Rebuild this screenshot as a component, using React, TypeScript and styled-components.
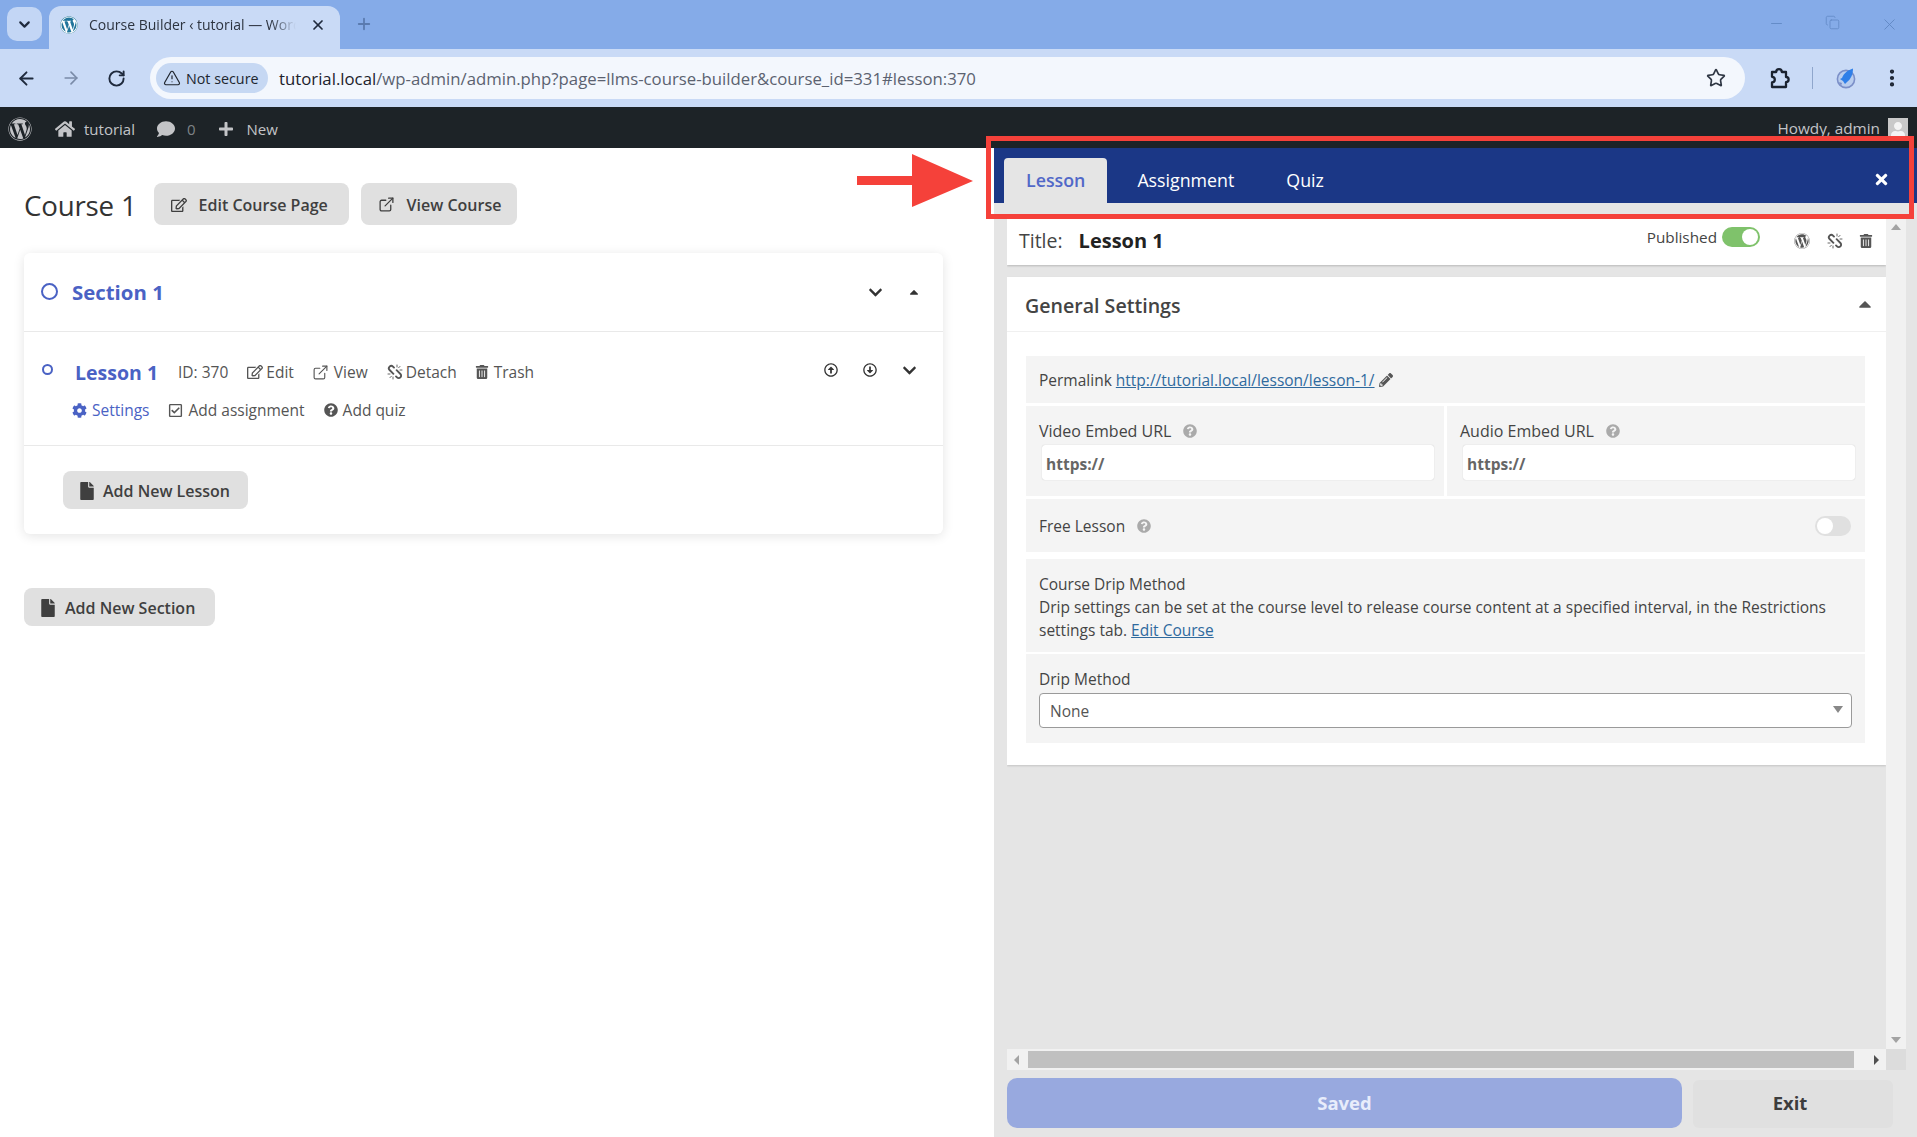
import React from "react";
import styled, { createGlobalStyle } from "styled-components";
import { ArrowLeft, ArrowRight, RotateCw, TriangleAlert, Star, EllipsisVertical, ChevronDown, Plus, X, Minus, Copy, ExternalLink } from "lucide-react";
import {
  FaWordpress, FaHome, FaComment, FaPlus, FaTimes, FaRegEdit, FaChevronDown, FaCaretUp, FaTrashAlt,
  FaCog, FaRegCheckSquare, FaQuestionCircle, FaFile, FaRegArrowAltCircleUp, FaRegArrowAltCircleDown, FaPencilAlt, FaUser,
} from "react-icons/fa";

const Global = createGlobalStyle`
  html, body { margin: 0; padding: 0; height: 100%; overflow: hidden; background: #fff; }
  body { font-family: "Open Sans", "Noto Sans", sans-serif; color: #444; }
  * { box-sizing: border-box; }
`;

const Page = styled.div`
  position: relative;
  width: 1917px;
  height: 1137px;
  display: flex;
  flex-direction: column;
  overflow: hidden;
`;

/* browser chrome */
const TabStrip = styled.div`
  height: 49px;
  background: #85abe8;
  display: flex;
  align-items: flex-end;
  padding-left: 7px;
  flex: none;
`;
const TabMenu = styled.div`
  width: 35px;
  height: 34px;
  margin-bottom: 8px;
  border-radius: 10px;
  background: #c3d6f5;
  display: flex;
  align-items: center;
  justify-content: center;
  color: #1f2a3d;
`;
const BrowserTab = styled.div`
  width: 291px;
  height: 43px;
  margin-left: 7px;
  padding: 0 0 6px 11px;
  border-radius: 12px 12px 0 0;
  background: #c9daf6;
  display: flex;
  align-items: center;
`;
const Favicon = styled.div`
  width: 18px;
  height: 18px;
  border-radius: 50%;
  background: #fff;
  color: #21759b;
  display: flex;
  align-items: center;
  justify-content: center;
  flex: none;
`;
const TabTitle = styled.div`
  width: 207px;
  height: 20px;
  margin-left: 11px;
  font: 14px/20px "Open Sans", sans-serif;
  color: #2d3440;
  white-space: nowrap;
  overflow: hidden;
  -webkit-mask-image: linear-gradient(90deg, #000 88%, transparent);
  mask-image: linear-gradient(90deg, #000 88%, transparent);
`;
const TabClose = styled.div`
  margin-left: 14px;
  display: flex;
  color: #1f2a3d;
`;
const NewTab = styled.div`
  margin: 0 0 16px 15px;
  display: flex;
  color: #5a7bb0;
`;
const WindowControls = styled.div`
  margin-left: auto;
  align-self: center;
  padding-right: 18px;
  display: flex;
  gap: 40px;
  color: #5f86c2;
`;
const Toolbar = styled.div`
  height: 58px;
  background: #c9daf6;
  display: flex;
  align-items: center;
  flex: none;
  padding-left: 14px;
`;
const NavIcon = styled.div<{ $muted?: boolean }>`
  width: 24px;
  margin-right: 21px;
  display: flex;
  justify-content: center;
  color: ${(p) => (p.$muted ? "#7a8ba8" : "#1f2a3d")};
`;
const Omnibox = styled.div`
  width: 1595px;
  height: 42px;
  margin-left: 1px;
  border-radius: 21px;
  background: #f3f7fd;
  display: flex;
  align-items: center;
  padding: 0 19px 0 6px;
`;
const SecurityChip = styled.div`
  width: 112px;
  height: 30px;
  border-radius: 15px;
  background: #c6d8f3;
  display: flex;
  align-items: center;
  gap: 5px;
  padding-left: 7px;
  font: 14.3px "Open Sans", sans-serif;
  color: #20262f;
  white-space: nowrap;
`;
const Url = styled.div`
  margin-left: 11px;
  font: 16.75px "Open Sans", sans-serif;
  color: #5b6270;
  white-space: nowrap;
  b { font-weight: 400; color: #1c222b; }
`;
const OmniEnd = styled.div`
  margin-left: auto;
  display: flex;
  color: #2f3744;
`;
const ToolIcons = styled.div`
  display: flex;
  align-items: center;
  margin-left: 22px;
  color: #1a2230;
`;
const ToolSep = styled.div`
  width: 1px;
  height: 22px;
  background: #8fa6cc;
  margin: 0 23px 0 21px;
`;
const GlobeIcon = styled.svg`
  margin-right: 25px;
  display: block;
`;

/* WP admin bar */
const AdminBar = styled.div`
  height: 41px;
  background: #1d2327;
  color: #c3c4c7;
  display: flex;
  align-items: center;
  padding: 2px 0 0 8px;
  font: 15px "Open Sans", sans-serif;
  flex: none;
`;
const AdminItem = styled.div<{ $left: number }>`
  margin-left: ${(p) => p.$left}px;
  display: flex;
  align-items: center;
  color: #c3c4c7;
`;
const AdminDim = styled(AdminItem)`
  color: #7d8286;
`;
const Howdy = styled.div`
  margin-left: auto;
  display: flex;
  align-items: flex-start;
  align-self: flex-start;
  padding: 9px 9px 0 0;
  gap: 8px;
  font-size: 15.3px;
`;
const Avatar = styled.div`
  width: 20px;
  height: 20px;
  background: #c9c9c9;
  color: #f4f4f4;
  display: flex;
  align-items: flex-end;
  justify-content: center;
  overflow: hidden;
`;

/* main */
const Main = styled.div`
  flex: 1;
  display: flex;
  min-height: 0;
`;
const Builder = styled.div`
  width: 994px;
  padding: 35px 0 0 24px;
  background: #fff;
  flex: none;
`;
const CourseHead = styled.div`
  display: flex;
  align-items: center;
  height: 42px;
  gap: 12px;
`;
const CourseTitle = styled.h1`
  margin: 0 5px 0 0;
  padding-top: 1px;
  font: 400 27.7px "Open Sans", sans-serif;
  letter-spacing: -0.2px;
  color: #333;
  white-space: nowrap;
`;
const GreyButton = styled.button<{ $width: number; $height: number; $gap?: number; $pad?: number }>`
  width: ${(p) => p.$width}px;
  height: ${(p) => p.$height}px;
  border: 0;
  border-radius: 8px;
  background: #e0e0e0;
  color: #3f3f3f;
  font: 600 16px "Open Sans", sans-serif;
  display: flex;
  align-items: center;
  gap: ${(p) => p.$gap ?? 12}px;
  padding: 1px 0 0 ${(p) => p.$pad ?? 17}px;
  white-space: nowrap;
  svg { flex: none; }
`;
const Card = styled.div`
  width: 919px;
  height: 281px;
  margin-top: 28px;
  border-radius: 6px;
  background: #fff;
  box-shadow: 0 2px 12px rgba(0, 0, 0, 0.11);
`;
const SectionRow = styled.div`
  height: 79px;
  border-bottom: 1px solid #e9e9e9;
  display: flex;
  align-items: center;
  padding: 0 22px 0 17px;
`;
const Ring = styled.span<{ $size: number; $border: number; $lift: number }>`
  width: ${(p) => p.$size}px;
  height: ${(p) => p.$size}px;
  margin-bottom: ${(p) => p.$lift}px;
  border: ${(p) => p.$border}px solid #4a62c4;
  border-radius: 50%;
  flex: none;
`;
const SectionName = styled.div`
  margin-left: 14px;
  font: 700 20.4px "Open Sans", sans-serif;
  color: #4a62c4;
`;
const RowEnd = styled.div<{ $gap: number; $lift?: number }>`
  margin: 0 0 ${(p) => p.$lift ?? 0}px auto;
  display: flex;
  align-items: center;
  gap: ${(p) => p.$gap}px;
  color: #333;
`;
const LessonBlock = styled.div`
  height: 114px;
  border-bottom: 1px solid #e9e9e9;
  padding: 24px 26px 0 18px;
`;
const LessonTop = styled.div`
  display: flex;
  align-items: center;
  height: 32px;
`;
const LessonName = styled.div`
  margin-left: 22px;
  font: 700 19.5px "Open Sans", sans-serif;
  color: #4a62c4;
  white-space: nowrap;
`;
const Meta = styled.span<{ $left: number; $accent?: boolean; $gap?: number }>`
  margin-left: ${(p) => p.$left}px;
  display: inline-flex;
  align-items: center;
  gap: ${(p) => p.$gap ?? 5}px;
  font: 400 15.5px "Open Sans", sans-serif;
  color: ${(p) => (p.$accent ? "#4a62c4" : "#555")};
  white-space: nowrap;
  svg { color: ${(p) => (p.$accent ? "#4a62c4" : "#555")}; }
`;
const LessonBottom = styled.div`
  display: flex;
  align-items: center;
  height: 24px;
  margin-top: 10px;
  padding-left: 30px;
`;
const CardFoot = styled.div`
  padding: 25px 0 0 39px;
`;
const SectionAdd = styled.div`
  margin-top: 54px;
`;

/* side panel */
const Panel = styled.div`
  flex: 1;
  background: #e5e5e5;
  display: flex;
  flex-direction: column;
  min-width: 0;
`;
const PanelTabs = styled.div`
  height: 55px;
  flex: none;
  background: #1b3786;
  display: flex;
  align-items: flex-end;
  gap: 8px;
  padding: 0 27px 0 10px;
`;
const PanelTab = styled.div<{ $active?: boolean }>`
  height: 45px;
  padding: 0 22px;
  border-radius: 4px 4px 0 0;
  background: ${(p) => (p.$active ? "#e5e5e5" : "transparent")};
  color: ${(p) => (p.$active ? "#5168c8" : "#fff")};
  font: ${(p) => (p.$active ? 600 : 400)} 17.8px/45px "Open Sans", sans-serif;
`;
const PanelClose = styled.div`
  margin: 0 0 15px auto;
  display: flex;
  color: #fff;
`;
const ScrollGrid = styled.div`
  flex: none;
  height: 852px;
  margin: 15px 0 0 13px;
  display: grid;
  grid-template-columns: 879px 20px;
  grid-template-rows: 831px 21px;
`;
const Scroller = styled.div`
  overflow: hidden;
`;
const TitleCard = styled.div`
  height: 47px;
  background: #fff;
  box-shadow: 0 1px 2px rgba(0, 0, 0, 0.2);
  display: flex;
  align-items: center;
  padding: 0 13px 2px 12px;
`;
const TitleLabel = styled.span`
  font: 400 19.5px "Open Sans", sans-serif;
  color: #444;
`;
const TitleValue = styled.span`
  margin-left: 16px;
  font: 700 20px "Open Sans", sans-serif;
  color: #222;
`;
const TitleTools = styled.div`
  margin-left: auto;
  display: flex;
  align-items: center;
  color: #555;
`;
const PublishedText = styled.span`
  font: 400 15.3px "Open Sans", sans-serif;
  color: #444;
  margin: 0 5px 7px 0;
`;
const Toggle = styled.span<{ $on?: boolean }>`
  width: ${(p) => (p.$on ? 38 : 36)}px;
  height: 20px;
  margin-bottom: ${(p) => (p.$on ? 7 : 0)}px;
  margin-left: ${(p) => (p.$on ? 0 : "auto")};
  border-radius: 10px;
  background: ${(p) => (p.$on ? "#7fc26b" : "#e0e0e0")};
  display: flex;
  justify-content: ${(p) => (p.$on ? "flex-end" : "flex-start")};
  align-items: center;
  padding: 2px;
  flex: none;
  &::after {
    content: "";
    width: 16px;
    height: 16px;
    border-radius: 50%;
    background: #fff;
  }
`;
const ToolIcon = styled.span<{ $left: number }>`
  margin-left: ${(p) => p.$left}px;
  display: flex;
`;
const SettingsCard = styled.div`
  margin-top: 12px;
  height: 488px;
  background: #fff;
  box-shadow: 0 1px 2px rgba(0, 0, 0, 0.15);
`;
const SettingsHead = styled.div`
  height: 55px;
  border-bottom: 1px solid #f0f0f0;
  display: flex;
  align-items: center;
  padding: 2px 11px 0 18px;
  font: 600 19.6px "Open Sans", sans-serif;
  color: #444;
`;
const HeadCaret = styled.span`
  margin: 0 0 2px auto;
  display: flex;
  color: #555;
`;
const SettingsBody = styled.div`
  padding: 24px 21px 0 19px;
  display: flex;
  flex-direction: column;
`;
const Row = styled.div<{ $height: number; $gap: number }>`
  height: ${(p) => p.$height}px;
  margin-bottom: ${(p) => p.$gap}px;
  background: #f4f4f4;
  font: 400 15.5px "Open Sans", sans-serif;
  color: #444;
`;
const InlineRow = styled(Row)`
  display: flex;
  align-items: center;
  padding: 0 14px 0 13px;
  gap: 4px;
  > svg { color: #555; }
`;
const Link = styled.a`
  color: #2f6a9e;
  text-decoration: underline;
`;
const Split = styled.div`
  height: 90px;
  margin-bottom: 3px;
  display: grid;
  grid-template-columns: 1fr 1fr;
  gap: 3px;
`;
const Col = styled.div`
  background: #f4f4f4;
  padding: 15px 10px 0 13px;
  font: 400 16px "Open Sans", sans-serif;
  color: #444;
`;
const FieldLabel = styled.div`
  display: flex;
  align-items: center;
  gap: 12px;
  height: 20px;
  white-space: nowrap;
  svg { color: #aaa; }
`;
const FieldInput = styled.div`
  height: 35px;
  margin: 4px 0 0 3px;
  border-radius: 3px;
  background: #fff;
  box-shadow: 0 0 1px rgba(0, 0, 0, 0.25);
  padding-left: 4px;
  font: 700 15.5px/38px "Open Sans", sans-serif;
  color: #666;
`;
const DripTitle = styled.div`
  padding-top: 14px;
  line-height: 23px;
  font-weight: 500;
`;
const DripRow = styled(Row)`
  padding: 0 13px;
  line-height: 23px;
`;
const Select = styled.div`
  height: 35px;
  margin-top: 2px;
  padding: 2px 8px 0 10px;
  border: 1px solid #9a9a9a;
  border-radius: 4px;
  background: #fff;
  display: flex;
  align-items: center;
  color: #555;
  span { margin-left: auto; margin-bottom: 4px; width: 0; height: 0; border: 5px solid transparent; border-top: 7px solid #888; border-bottom: 0; }
`;
const VTrack = styled.div`
  background: #f1f1f1;
  display: flex;
  flex-direction: column;
  justify-content: space-between;
  align-items: center;
  padding: 6px 0;
`;
const HTrack = styled.div`
  background: #f1f1f1;
  display: flex;
  align-items: center;
  padding: 0 7px;
`;
const HThumb = styled.div`
  width: 826px;
  height: 17px;
  margin: 0 auto 0 9px;
  background: #c0c0c0;
`;
const Corner = styled.div`
  background: #dcdcdc;
`;
const Arrow = styled.span<{ $dir: "up" | "down" | "left" | "right"; $dark?: boolean }>`
  width: 0;
  height: 0;
  flex: none;
  border: 4px solid transparent;
  ${(p) => {
    const c = p.$dark ? "#505050" : "#a3a3a3";
    if (p.$dir === "up") return `border-bottom: 6px solid ${c}; border-top: 0; border-left-width: 5px; border-right-width: 5px;`;
    if (p.$dir === "down") return `border-top: 6px solid ${c}; border-bottom: 0; border-left-width: 5px; border-right-width: 5px;`;
    if (p.$dir === "left") return `border-right: 5px solid ${c}; border-left: 0; border-top-width: 5px; border-bottom-width: 5px;`;
    return `border-left: 5px solid ${c}; border-right: 0; border-top-width: 5px; border-bottom-width: 5px;`;
  }}
`;
const Actions = styled.div`
  height: 50px;
  margin: 8px 0 0 13px;
  display: flex;
  gap: 11px;
`;
const SavedButton = styled.button`
  width: 675px;
  height: 50px;
  padding: 0 0 2px;
  border: 0;
  border-radius: 10px;
  background: #98a9df;
  color: #e8edfb;
  font: 700 18.5px "Open Sans", sans-serif;
`;
const ExitButton = styled.button`
  width: 200px;
  height: 48px;
  margin-top: 2px;
  padding: 0 6px 3px 0;
  border: 0;
  border-radius: 6px;
  background: #e0e0e0;
  color: #3d3d3d;
  font: 700 18.5px "Open Sans", sans-serif;
`;

/* annotations over the page */
const RedBox = styled.div`
  position: absolute;
  left: 986px;
  top: 136px;
  width: 928px;
  height: 83px;
  border: 5px solid #f5413a;
  pointer-events: none;
`;
const RedArrow = styled.svg`
  position: absolute;
  left: 857px;
  top: 154px;
  display: block;
`;
const ChainSvg = styled.svg`
  flex: none;
  display: block;
`;

function BrokenChain() {
  return (
    <ChainSvg width="16" height="16" viewBox="0 0 16 16" fill="none" stroke="currentColor" strokeLinecap="round">
      <path d="M7 3.6 L6 2.6 a2.4 2.4 0 0 0 -3.4 3.4 L6.4 9.8" strokeWidth="1.9" />
      <path d="M9.6 6.2 L13.4 10 a2.4 2.4 0 0 1 -3.4 3.4 L9 12.4" strokeWidth="1.9" />
      <path d="M10 1 v2 M13 2.4 l-1.4 1.4 M15 6 h-2 M6 15 v-2 M3 13.6 l1.4-1.4 M1 10 h2" strokeWidth="0.9" />
    </ChainSvg>
  );
}

export default function App() {
  return (
    <Page>
      <Global />
      <TabStrip>
        <TabMenu><ChevronDown size={17} strokeWidth={3} /></TabMenu>
        <BrowserTab>
          <Favicon><FaWordpress size={18} /></Favicon>
          <TabTitle>Course Builder ‹ tutorial — WordPress</TabTitle>
          <TabClose><X size={16} strokeWidth={2.6} /></TabClose>
        </BrowserTab>
        <NewTab><Plus size={18} strokeWidth={2.4} /></NewTab>
        <WindowControls>
          <Minus size={17} strokeWidth={1.2} />
          <Copy size={15} strokeWidth={1.2} />
          <X size={19} strokeWidth={1.1} />
        </WindowControls>
      </TabStrip>
      <Toolbar>
        <NavIcon><ArrowLeft size={21} strokeWidth={2.2} /></NavIcon>
        <NavIcon $muted><ArrowRight size={20} strokeWidth={2} /></NavIcon>
        <NavIcon><RotateCw size={19} strokeWidth={2.4} /></NavIcon>
        <Omnibox>
          <SecurityChip><TriangleAlert size={18} strokeWidth={1.6} />Not secure</SecurityChip>
          <Url><b>tutorial.local</b>/wp-admin/admin.php?page=llms-course-builder&amp;course_id=331#lesson:370</Url>
          <OmniEnd><Star size={20} strokeWidth={2} /></OmniEnd>
        </Omnibox>
        <ToolIcons>
          <svg width="24" height="24" viewBox="0 0 24 24" fill="none" stroke="currentColor" strokeWidth="2.3" strokeLinejoin="round">
            <path d="M5 6h4.2a2.8 2.8 0 0 1 5.6 0H19v5a2.6 2.6 0 0 1 0 5.2V21H5v-4.6a2.8 2.8 0 0 0 0-5.6Z" />
          </svg>
          <ToolSep />
          <GlobeIcon width="20" height="21" viewBox="0 0 20 21">
            <circle cx="10" cy="11" r="8.6" fill="#b9cdee" stroke="#7b8fc8" strokeWidth="1.6" />
            <path d="M17 0.5 C12 2 8 5 6 10 L4 11 L7 13 L9 16 L11 14 C15 11 17 6 17 0.5Z" fill="#2f7fe8" />
            <path d="M3 14 L6 15 L5 18Z" fill="#7b8fc8" />
          </GlobeIcon>
          <EllipsisVertical size={22} strokeWidth={2.6} />
        </ToolIcons>
      </Toolbar>
      <AdminBar>
        <AdminItem $left={0}><FaWordpress size={24} /></AdminItem>
        <AdminItem $left={23}><FaHome size={20} /></AdminItem>
        <AdminItem $left={9}>tutorial</AdminItem>
        <AdminItem $left={22}><FaComment size={18} /></AdminItem>
        <AdminDim $left={12}>0</AdminDim>
        <AdminItem $left={22}><FaPlus size={16} /></AdminItem>
        <AdminItem $left={13}>New</AdminItem>
        <Howdy>
          Howdy, admin
          <Avatar><FaUser size={16} /></Avatar>
        </Howdy>
      </AdminBar>
      <Main>
        <Builder>
          <CourseHead>
            <CourseTitle>Course 1</CourseTitle>
            <GreyButton $width={195} $height={42}><FaRegEdit size={16} />Edit Course Page</GreyButton>
            <GreyButton $width={156} $height={42}><ExternalLink size={17} strokeWidth={1.8} />View Course</GreyButton>
          </CourseHead>
          <Card>
            <SectionRow>
              <Ring $size={17} $border={2} $lift={2} />
              <SectionName>Section 1</SectionName>
              <RowEnd $gap={24}>
                <FaChevronDown size={15} />
                <FaCaretUp size={14} />
              </RowEnd>
            </SectionRow>
            <LessonBlock>
              <LessonTop>
                <Ring $size={11} $border={2} $lift={5} />
                <LessonName>Lesson 1</LessonName>
                <Meta $left={20}>ID: 370</Meta>
                <Meta $left={19} $gap={3}><FaRegEdit size={16} />Edit</Meta>
                <Meta $left={18}><ExternalLink size={17} strokeWidth={1.6} />View</Meta>
                <Meta $left={19} $gap={3}><BrokenChain />Detach</Meta>
                <Meta $left={18}><FaTrashAlt size={14} />Trash</Meta>
                <RowEnd $gap={25} $lift={4}>
                  <FaRegArrowAltCircleUp size={14} />
                  <FaRegArrowAltCircleDown size={14} />
                  <FaChevronDown size={15} />
                </RowEnd>
              </LessonTop>
              <LessonBottom>
                <Meta $left={0} $accent><FaCog size={15} />Settings</Meta>
                <Meta $left={19}><FaRegCheckSquare size={15} />Add assignment</Meta>
                <Meta $left={19}><FaQuestionCircle size={14} />Add quiz</Meta>
              </LessonBottom>
            </LessonBlock>
            <CardFoot>
              <GreyButton $width={185} $height={38} $gap={7} $pad={15}><FaFile size={18} />Add New Lesson</GreyButton>
            </CardFoot>
          </Card>
          <SectionAdd>
            <GreyButton $width={191} $height={38} $gap={8} $pad={15}><FaFile size={18} />Add New Section</GreyButton>
          </SectionAdd>
        </Builder>
        <Panel>
          <PanelTabs>
            <PanelTab $active>Lesson</PanelTab>
            <PanelTab>Assignment</PanelTab>
            <PanelTab>Quiz</PanelTab>
            <PanelClose><FaTimes size={17} /></PanelClose>
          </PanelTabs>
          <ScrollGrid>
            <Scroller>
              <TitleCard>
                <TitleLabel>Title:</TitleLabel>
                <TitleValue>Lesson 1</TitleValue>
                <TitleTools>
                  <PublishedText>Published</PublishedText>
                  <Toggle $on />
                  <ToolIcon $left={34}><FaWordpress size={16} /></ToolIcon>
                  <ToolIcon $left={17}><BrokenChain /></ToolIcon>
                  <ToolIcon $left={16}><FaTrashAlt size={14} /></ToolIcon>
                </TitleTools>
              </TitleCard>
              <SettingsCard>
                <SettingsHead>
                  General Settings
                  <HeadCaret><FaCaretUp size={20} /></HeadCaret>
                </SettingsHead>
                <SettingsBody>
                  <InlineRow $height={47} $gap={3}>
                    Permalink <Link>http://tutorial.local/lesson/lesson-1/</Link>
                    <FaPencilAlt size={14} />
                  </InlineRow>
                  <Split>
                    <Col>
                      <FieldLabel>Video Embed URL <FaQuestionCircle size={14} /></FieldLabel>
                      <FieldInput>https://</FieldInput>
                    </Col>
                    <Col>
                      <FieldLabel>Audio Embed URL <FaQuestionCircle size={14} /></FieldLabel>
                      <FieldInput>https://</FieldInput>
                    </Col>
                  </Split>
                  <InlineRow $height={53} $gap={7}>
                    <FieldLabel>Free Lesson <FaQuestionCircle size={14} /></FieldLabel>
                    <Toggle />
                  </InlineRow>
                  <DripRow $height={93} $gap={2}>
                    <DripTitle>Course Drip Method</DripTitle>
                    Drip settings can be set at the course level to release course content at a specified interval, in the Restrictions settings tab. <Link>Edit Course</Link>
                  </DripRow>
                  <DripRow $height={89} $gap={0}>
                    <DripTitle>Drip Method</DripTitle>
                    <Select>None<span /></Select>
                  </DripRow>
                </SettingsBody>
              </SettingsCard>
            </Scroller>
            <VTrack>
              <Arrow $dir="up" />
              <Arrow $dir="down" />
            </VTrack>
            <HTrack>
              <Arrow $dir="left" />
              <HThumb />
              <Arrow $dir="right" $dark />
            </HTrack>
            <Corner />
          </ScrollGrid>
          <Actions>
            <SavedButton>Saved</SavedButton>
            <ExitButton>Exit</ExitButton>
          </Actions>
        </Panel>
      </Main>
      <RedBox />
      <RedArrow width="116" height="54" viewBox="0 0 116 54">
        <polygon points="0,22 55,22 55,0 116,27 55,53 55,31 0,31" fill="#f5413a" />
      </RedArrow>
    </Page>
  );
}
